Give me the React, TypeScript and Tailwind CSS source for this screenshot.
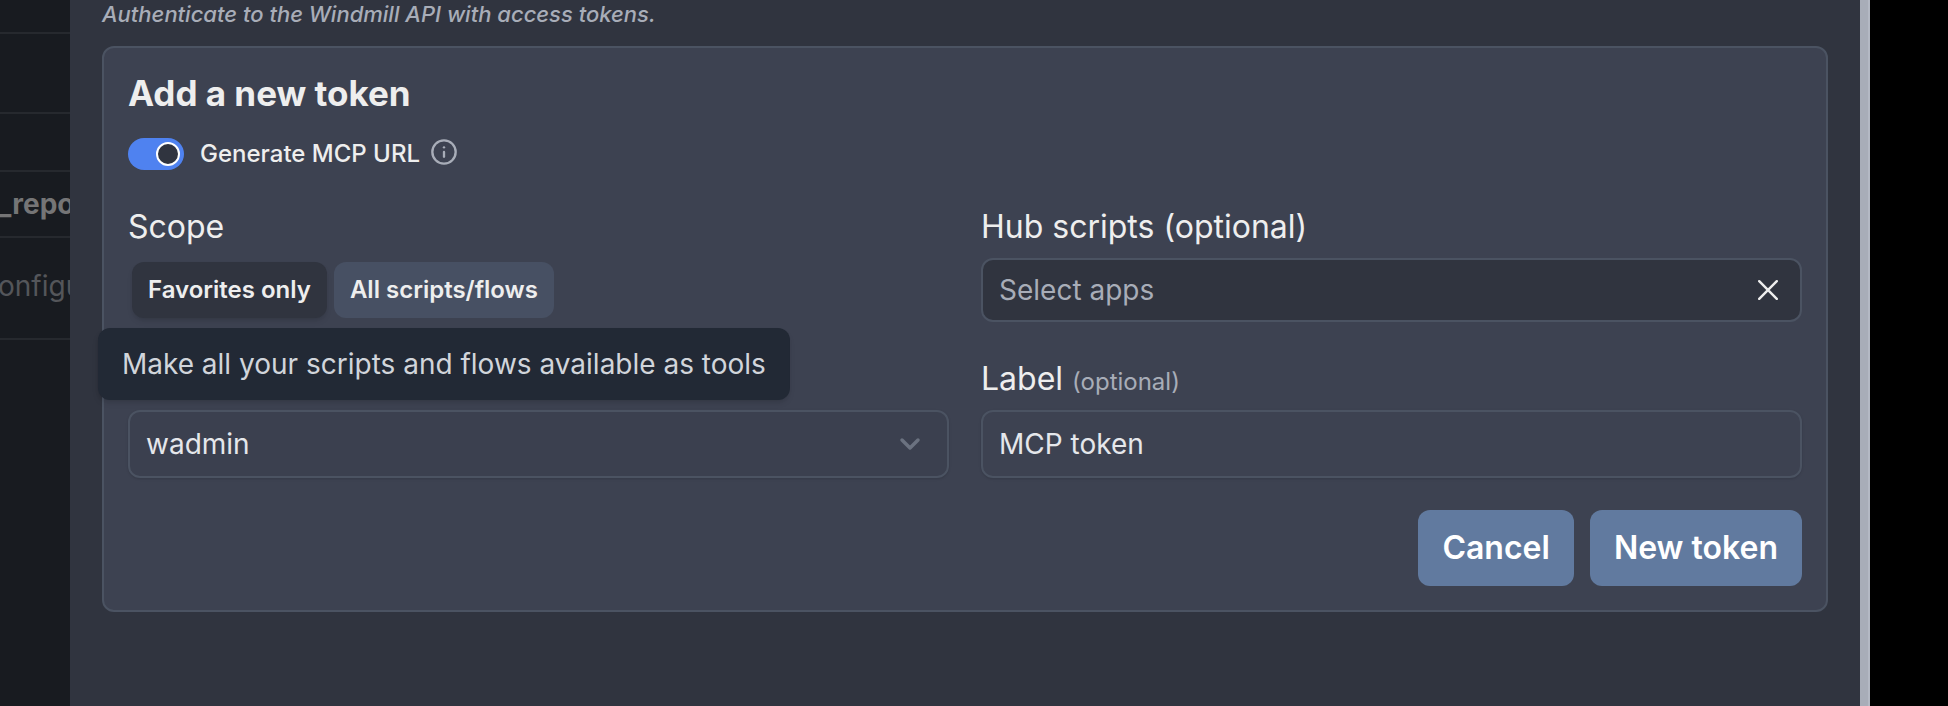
import { useState } from "react";
import { ChevronDown, Info } from "lucide-react";

function BackgroundRows() {
  return (
    <div className="w-[70px] shrink-0 overflow-hidden whitespace-nowrap bg-[#181b20] text-[28px]">
      <div className="h-[34px] border-b-2 border-[#26292e]" />
      <div className="h-20 border-b-2 border-[#26292e]" />
      <div className="h-[58px] border-b-2 border-[#26292e]" />
      <div className="-ml-0.5 flex h-[66px] items-center border-b-2 border-[#26292e] font-bold text-[#757576]">
        _repo
      </div>
      <div className="-ml-0.5 flex h-[102px] items-center border-b-2 border-[#26292e] pb-1 text-[#54565a]">
        onfigu
      </div>
    </div>
  );
}

export default function App() {
  const [mcp, setMcp] = useState(true);
  const [scope, setScope] = useState("favorites");
  const [apps, setApps] = useState("");
  const [label, setLabel] = useState("MCP token");

  return (
    <div className="flex min-h-screen bg-black font-['Inter',sans-serif] [font-optical-sizing:none]">
      <BackgroundRows />

      <main className="min-w-0 flex-1 bg-[#30343f] px-8">
        <p className="mb-[18px] text-[22px] font-medium italic leading-7 text-[#a8adb8]">
          Authenticate to the Windmill API with access tokens.
        </p>

        <form
          className="rounded-xl border-2 border-[#4b5362] bg-[#3d4251] p-6"
          onSubmit={(e) => e.preventDefault()}
        >
          <h2 className="mb-6 text-[35px] font-bold leading-[42px] text-[#eeeeee]">
            Add a new token
          </h2>

          <div className="mb-8 flex h-8 items-start">
            <label className="flex items-center gap-4 text-[24px] font-medium leading-8 text-[#eeeeee]">
              <input
                type="checkbox"
                checked={mcp}
                onChange={(e) => setMcp(e.target.checked)}
                className="peer sr-only"
              />
              <span className="flex h-8 w-14 items-center rounded-full bg-[#6b7280] p-1 peer-checked:justify-end peer-checked:bg-[#4f82f0]">
                <span className="size-6 rounded-full border-2 border-white bg-[#30343f]" />
              </span>
              Generate MCP URL
            </label>
            <Info className="ml-[10px] size-7 text-[#a8adb8]" strokeWidth={2} />
          </div>

          <div className="grid grid-cols-2 gap-8">
            <div>
              <h3 className="mb-[6px] text-[32px] leading-[50px] text-[#eeeeee]">Scope</h3>
              <div className="flex h-16 gap-[7px] p-1 text-[24px] font-semibold text-[#eeeeee]">
                <button
                  type="button"
                  aria-pressed={scope === "favorites"}
                  onClick={() => setScope("favorites")}
                  className="rounded-xl bg-[#475063] px-4 aria-pressed:bg-[#30343f] aria-pressed:shadow-md"
                >
                  Favorites only
                </button>
                <div className="relative flex">
                  <button
                    type="button"
                    aria-pressed={scope === "all"}
                    onClick={() => setScope("all")}
                    className="rounded-xl bg-[#475063] px-4 aria-pressed:bg-[#30343f] aria-pressed:shadow-md"
                  >
                    All scripts/flows
                  </button>
                  <div
                    role="tooltip"
                    className="absolute left-1/2 top-full z-10 mt-[10px] -translate-x-1/2 whitespace-nowrap rounded-xl bg-[#222935] px-6 py-4 text-[28px] font-normal leading-10 text-[#d1d5db] shadow-md"
                  >
                    Make all your scripts and flows available as tools
                  </div>
                </div>
              </div>
            </div>

            <div>
              <label htmlFor="hub" className="mb-[6px] block text-[32px] leading-[50px] text-[#eeeeee]">
                Hub scripts (optional)
              </label>
              <div className="flex h-16 items-center rounded-xl border-2 border-[#4b5362] bg-[#30343f] pl-4 pr-[22px]">
                <input
                  id="hub"
                  type="text"
                  value={apps}
                  onChange={(e) => setApps(e.target.value)}
                  placeholder="Select apps"
                  className="min-w-0 flex-1 bg-transparent text-[28px] text-[#eeeeee] placeholder-[#a8adb8] outline-none"
                />
                <button type="button" aria-label="Clear" onClick={() => setApps("")}>
                  <svg viewBox="0 0 20 20" className="size-5" fill="none" stroke="#eeeeee" strokeWidth="2.4" strokeLinecap="round">
                    <path d="M1.2 1.2L18.8 18.8M18.8 1.2L1.2 18.8" />
                  </svg>
                </button>
              </div>
            </div>

            <div className="flex flex-col justify-end">
              <div className="grid items-center">
                <select
                  aria-label="Workspace"
                  className="col-start-1 row-start-1 h-[68px] w-full appearance-none rounded-xl border-2 border-[#4b5362] bg-[#3b404f] px-4 text-[28px] text-[#e5e7eb] shadow-sm outline-none"
                >
                  <option>wadmin</option>
                </select>
                <ChevronDown
                  className="pointer-events-none col-start-1 row-start-1 mr-[23px] size-8 justify-self-end text-[#6b7280]"
                  strokeWidth={2.6}
                />
              </div>
            </div>

            <div>
              <label htmlFor="label" className="mb-[6px] block text-[32px] leading-[50px] text-[#eeeeee]">
                Label <span className="text-[24px] leading-none text-[#a8adb8]">(optional)</span>
              </label>
              <input
                id="label"
                type="text"
                value={label}
                onChange={(e) => setLabel(e.target.value)}
                className="block h-[68px] w-full rounded-xl border-2 border-[#4b5362] bg-[#3d4251] px-4 text-[28px] text-[#e5e7eb] shadow-sm outline-none"
              />
            </div>
          </div>

          <div className="mt-8 flex justify-end gap-4 text-[32px] font-semibold text-white">
            <button type="button" className="h-[76px] rounded-xl bg-[#617a9f] px-6">
              Cancel
            </button>
            <button type="submit" className="h-[76px] rounded-xl bg-[#617a9f] px-6">
              New token
            </button>
          </div>
        </form>
      </main>

      <div className="w-[10px] shrink-0 border-r-2 border-[#b4b9c4] bg-[#a8adb8]" />
      <div className="w-[78px] shrink-0" />
    </div>
  );
}
